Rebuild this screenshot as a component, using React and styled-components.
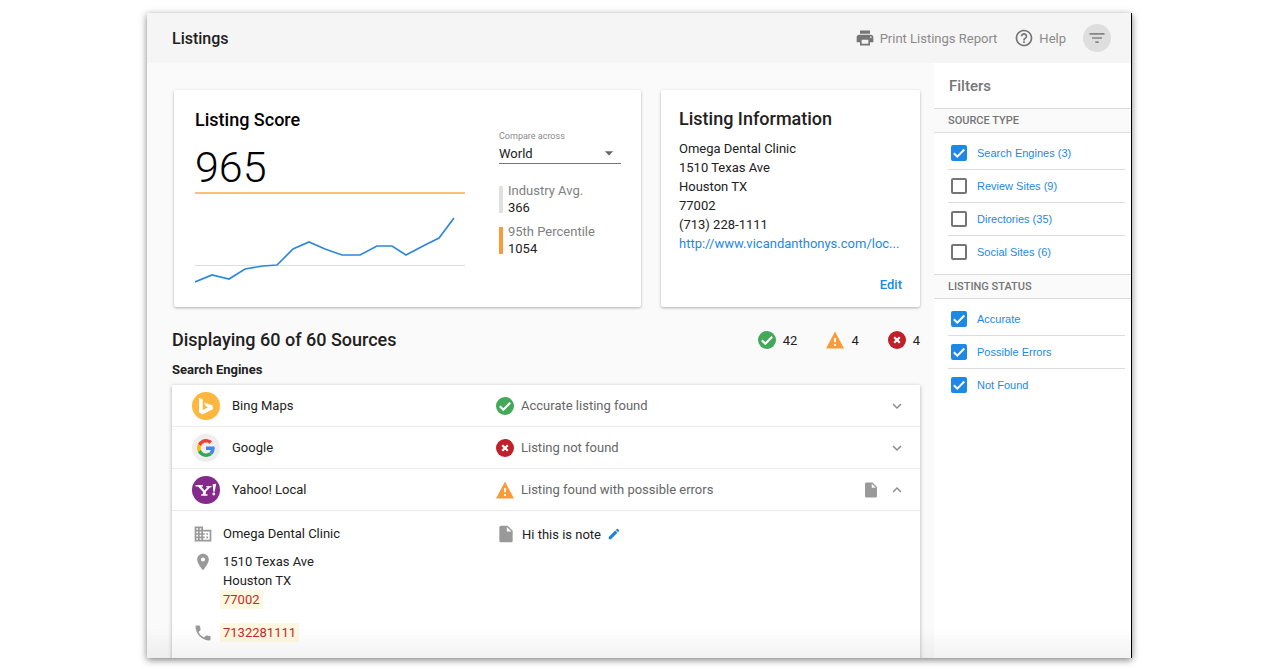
import React, { useState } from 'react';
import styled, { createGlobalStyle } from 'styled-components';
import {
    MdPrint,
    MdHelpOutline,
    MdFilterList,
    MdExpandMore,
    MdExpandLess,
    MdInsertDriveFile,
    MdEdit,
    MdBusiness,
    MdPlace,
    MdPhone,
    MdArrowDropDown
} from 'react-icons/md';

const GlobalStyle = createGlobalStyle`
    * {
        box-sizing: border-box;
    }

    body {
        margin: 0;
        background: #fff;
        color: #212121;
        font-family: Roboto, "Liberation Sans", sans-serif;
        font-size: 13px;
        line-height: 19px;
    }

    h1, h2, h3, p, ul, dl, dd {
        margin: 0;
        padding: 0;
    }

    ul {
        list-style: none;
    }

    button {
        padding: 0;
        border: 0;
        background: none;
        font: inherit;
        cursor: pointer;
    }

    a {
        color: #1e88e5;
        text-decoration: none;
    }

    svg {
        display: block;
        flex: none;
    }
`;

const Page = styled.div`
    height: 100vh;
    padding: 13px 148px 11px 147px;
`;

const Window = styled.div`
    position: relative;
    display: flex;
    flex-direction: column;
    height: 100%;
    overflow: hidden;
    background: #fafafa;
    border-right: 1px solid #000;
    box-shadow: 0 2px 7px rgba(0, 0, 0, 0.5);

    &::after {
        content: '';
        position: absolute;
        inset: auto 0 0;
        height: 30px;
        background: linear-gradient(rgba(0, 0, 0, 0), rgba(0, 0, 0, 0.05));
        pointer-events: none;
    }
`;

const Toolbar = styled.header`
    display: flex;
    flex: none;
    align-items: center;
    justify-content: space-between;
    height: 50px;
    padding: 0 20px 0 25px;
    background: #f5f5f5;

    h1 {
        font-size: 16px;
        font-weight: 500;
    }
`;

const Actions = styled.div`
    display: flex;
    align-items: center;
    gap: 17px;
`;

const ActionButton = styled.button`
    display: flex;
    align-items: center;
    gap: 5px;
    color: #8a8a8a;

    svg {
        color: #757575;
    }
`;

const RoundButton = styled.button`
    display: grid;
    place-items: center;
    width: 28px;
    height: 28px;
    border-radius: 50%;
    background: #dedede;
    color: #858585;
`;

const Body = styled.div`
    display: flex;
    flex: 1;
    min-height: 0;
`;

const Main = styled.main`
    flex: 1;
    min-width: 0;
    padding: 27px 14px 0 25px;
`;

const Cards = styled.div`
    display: grid;
    grid-template-columns: 467fr 259fr;
    gap: 20px;
    padding-left: 2px;
`;

const Card = styled.section`
    min-width: 0;
    border-radius: 2px;
    background: #fff;
    box-shadow: 0 1px 3px rgba(0, 0, 0, 0.3);
`;

const ScoreCard = styled(Card)`
    display: grid;
    grid-template-columns: 270fr 122fr;
    gap: 34px;
    padding: 18px 20px 21px 21px;
`;

const ScoreTitle = styled.h2`
    color: #000;
    font-size: 18px;
    font-weight: 500;
    line-height: 24px;
`;

const Score = styled.div`
    padding-top: 10px;
    color: #000;
    font-size: 43px;
    font-weight: 300;
    line-height: 50px;
`;

const Chart = styled.svg`
    width: 100%;
    height: auto;
`;

const Compare = styled.div`
    padding-top: 22px;

    label {
        display: block;
        color: #8a8a8a;
        font-size: 9px;
        line-height: 13px;
    }
`;

const SelectBox = styled.div`
    display: grid;
    align-items: center;
    border-bottom: 1px solid #757575;

    select, svg {
        grid-area: 1 / 1;
    }

    select {
        width: 100%;
        height: 20px;
        padding: 0;
        border: 0;
        appearance: none;
        background: none;
        color: #212121;
        font: inherit;
    }

    svg {
        justify-self: end;
        margin-right: 2px;
        color: #666;
        pointer-events: none;
    }
`;

const Stat = styled.dl`
    margin-top: ${({ $first }) => ($first ? 18 : 7)}px;
    display: flex;
    align-items: center;
    gap: 5px;

    &::before {
        content: '';
        width: 4px;
        height: 27px;
        background: ${({ $color }) => $color};
    }

    dt {
        color: #808080;
        line-height: 17px;
    }

    dd {
        line-height: 17px;
    }
`;

const InfoCard = styled(Card)`
    display: flex;
    flex-direction: column;
    padding: 16px 18px 13px 18px;

    h2 {
        margin-bottom: 8px;
        font-size: 18px;
        font-weight: 500;
        line-height: 25px;
    }

    a {
        display: block;
        overflow: hidden;
        text-overflow: ellipsis;
        white-space: nowrap;
    }

    button {
        align-self: flex-end;
        margin-top: auto;
        color: #1e88e5;
        font-weight: 500;
    }
`;

const Summary = styled.div`
    display: flex;
    align-items: center;
    justify-content: space-between;
    margin-top: 21px;

    h2 {
        font-size: 18px;
        font-weight: 500;
        line-height: 24px;
    }
`;

const Totals = styled.ul`
    display: flex;
    gap: 29px;

    li {
        display: flex;
        align-items: center;
        gap: 7px;
    }
`;

const GroupTitle = styled.h3`
    margin: 8px 0 5px;
    font-size: 13px;
    font-weight: 700;
    line-height: 20px;
`;

const Sources = styled.div`
    background: #fff;
    box-shadow: 0 1px 4px rgba(0, 0, 0, 0.3);
`;

const SourceRow = styled.div`
    display: grid;
    grid-template-columns: 324fr 424fr;
    align-items: center;
    height: 42px;
    border-bottom: 1px solid #ececec;
`;

const SourceName = styled.div`
    display: flex;
    align-items: center;
    gap: 12px;
    padding-left: 20px;
`;

const SourceStatus = styled.div`
    display: flex;
    align-items: center;
    gap: 7px;
    padding-right: 14px;
    color: #666;
`;

const RowTools = styled.div`
    display: flex;
    align-items: center;
    gap: 8px;
    margin-left: auto;
    color: #999;

    button {
        color: #8c8c8c;
    }
`;

const Details = styled.div`
    display: grid;
    grid-template-columns: 324fr 424fr;
    padding: 13px 0 40px;
`;

const Facts = styled.div`
    display: flex;
    flex-direction: column;
    gap: 8px;
    padding-left: 21px;
`;

const Fact = styled.div`
    display: grid;
    grid-template-columns: 20px 1fr;
    align-items: start;
    gap: 10px;
    margin-bottom: ${({ $spaced }) => ($spaced ? 6 : 0)}px;

    svg {
        color: #999;
    }
`;

const Wrong = styled.mark`
    padding: 2px 3px;
    margin-left: -3px;
    background: #fff8e1;
    color: #c62828;
`;

const Note = styled.div`
    display: flex;
    align-items: center;
    align-self: start;
    gap: 6px;

    svg {
        color: #999;
    }

    button svg {
        color: #1e7fdc;
    }
`;

const Sidebar = styled.aside`
    flex: none;
    width: 197px;
    background: #fff;

    h2 {
        padding: 14px 15px 12px;
        color: #757575;
        font-size: 15px;
        font-weight: 500;
        line-height: 19px;
    }
`;

const FilterGroup = styled.fieldset`
    min-width: 0;
    margin: 0;
    padding: 0;
    border: 0;
`;

const FilterTitle = styled.legend`
    width: 100%;
    padding: 0 14px;
    border: solid #dcdcdc;
    border-width: 1px 0;
    background: #fafafa;
    color: #757575;
    font-size: 11px;
    font-weight: 500;
    line-height: 23px;
`;

const FilterList = styled.ul`
    padding: 4px 6px 6px 14px;

    li + li {
        border-top: 1px solid #dcdcdc;
    }
`;

const FilterLabel = styled.label`
    display: flex;
    align-items: center;
    gap: 10px;
    height: 32px;
    padding-left: 3px;
    color: #1e88e5;
    font-family: "Liberation Sans", Arial, sans-serif;
    font-size: 11px;
`;

const Check = styled.span`
    display: grid;
    place-items: center;

    input, svg {
        grid-area: 1 / 1;
    }

    input {
        width: 16px;
        height: 16px;
        margin: 0;
        border: 2px solid #757575;
        border-radius: 2px;
        appearance: none;
        background: #fff;
    }

    input:checked {
        border-color: #1e88e5;
        background: #1e88e5;
    }

    svg {
        pointer-events: none;
    }
`;

const TickIcon = () => (
    <svg width="16" height="16" viewBox="0 0 16 16">
        <path d="M2.800 8.200l3.500 3.500 7-7.200" fill="none" stroke="#fff" strokeWidth="2"/>
    </svg>
);

const AccurateIcon = () => (
    <svg width="18" height="18" viewBox="0 0 18 18">
        <circle cx="9" cy="9" r="9" fill="#43a857"/>
        <path d="M3.800 9.200l3.500 3.500 6.900-7" fill="none" stroke="#fff" strokeWidth="2.200"/>
    </svg>
);

const MissingIcon = () => (
    <svg width="18" height="18" viewBox="0 0 18 18">
        <circle cx="9" cy="9" r="9" fill="#c1202b"/>
        <path d="M6.200 6.200l5.600 5.600M11.800 6.200l-5.600 5.600" stroke="#fff" strokeWidth="2.200"/>
    </svg>
);

const ErrorsIcon = () => (
    <svg width="18" height="18" viewBox="0 0 18 18">
        <path d="M9 .5l9 17H0z" fill="#fb9a38"/>
        <path d="M9 7v4.300M9 13v2" stroke="#fff" strokeWidth="1.800"/>
    </svg>
);

const statuses = {
    accurate: { text: 'Accurate listing found', icon: <AccurateIcon/> },
    missing: { text: 'Listing not found', icon: <MissingIcon/> },
    errors: { text: 'Listing found with possible errors', icon: <ErrorsIcon/> }
};

const sourceTypes = [
    { name: 'Search Engines (3)', checked: true },
    { name: 'Review Sites (9)', checked: false },
    { name: 'Directories (35)', checked: false },
    { name: 'Social Sites (6)', checked: false }
];

const listingStatuses = [
    { name: 'Accurate', checked: true },
    { name: 'Possible Errors', checked: true },
    { name: 'Not Found', checked: true }
];

const BingLogo = () => (
    <svg width="28" height="28" viewBox="0 0 28 28">
        <circle cx="14" cy="14" r="14" fill="#fdb73e"/>
        <path d="M7 5.800l3.700 1.500v11l5.300-3-2.400-1.200-1.500-3.700 8.700 3.200v3.600L10.500 22.500 7 20.300z" fill="#fff"/>
    </svg>
);

const GoogleLogo = () => (
    <svg width="28" height="28" viewBox="0 0 28 28">
        <circle cx="14" cy="14" r="14" fill="#eeeeee"/>
        <g transform="translate(5 5) scale(0.375)">
            <path fill="#EA4335" d="M24 9.500c3.540 0 6.710 1.220 9.210 3.600l6.850-6.850C35.900 2.380 30.470 0 24 0 14.620 0 6.510 5.380 2.560 13.220l7.980 6.190C12.430 13.720 17.740 9.500 24 9.500z"/>
            <path fill="#4285F4" d="M46.980 24.550c0-1.570-.15-3.090-.38-4.550H24v9.020h12.940c-.58 2.960-2.260 5.480-4.780 7.180l7.730 6c4.510-4.180 7.090-10.360 7.090-17.650z"/>
            <path fill="#FBBC05" d="M10.530 28.590c-.48-1.450-.76-2.990-.76-4.590s.27-3.140.76-4.590l-7.980-6.190C.92 16.460 0 20.120 0 24s.92 7.540 2.560 10.780l7.970-6.190z"/>
            <path fill="#34A853" d="M24 48c6.480 0 11.930-2.130 15.890-5.810l-7.730-6c-2.150 1.450-4.920 2.300-8.160 2.300-6.260 0-11.570-4.220-13.470-9.910l-7.980 6.190C6.510 42.620 14.620 48 24 48z"/>
        </g>
    </svg>
);

const YahooLogo = () => (
    <svg width="28" height="28" viewBox="0 0 28 28">
        <circle cx="14" cy="14" r="14" fill="#842a8b"/>
        <g fill="#fff">
            <path d="M3.500 9h7.500v1.500H9.300l3.200 4 3.100-3.200h-1.300V9.900h5.300v1.400h-1.400l-4.400 4.400v2.600h1.700v1.400H9.200v-1.400h1.700v-2.600L6 10.500H3.500z"/>
            <path d="M20.700 8.300l3.500-.5-1.500 8h-1.300z"/>
            <circle cx="21.800" cy="18" r="1.400"/>
        </g>
    </svg>
);

const ScoreChart = () => (
    <Chart viewBox="0 0 270 94" role="img" aria-label="Listing score over time">
        <path d="M0 1h270" stroke="#fdbf72" strokeWidth="2"/>
        <path d="M0 73.500h270" stroke="#dedede"/>
        <polyline
            points="0,90 17,83 34,87 50,77 68,74 82,73 98,57 114,50 130,57 147,63 165,63 182,54 197,54 211,63 228,54 244,46 259,26"
            fill="none"
            stroke="#2e87da"
            strokeWidth="1.700"
        />
    </Chart>
);

const Source = ({ name, logo, status, hasNote, open, onToggle }) => {
    const { text, icon } = statuses[status];

    return (
        <SourceRow>
            <SourceName>
                {logo}
                <span>{name}</span>
            </SourceName>
            <SourceStatus>
                {icon}
                <span>{text}</span>
                <RowTools>
                    {hasNote ? <MdInsertDriveFile size={18}/> : null}
                    <button type="button" aria-label={`Toggle ${name}`} aria-expanded={open} onClick={onToggle}>
                        {open ? <MdExpandLess size={18}/> : <MdExpandMore size={18}/>}
                    </button>
                </RowTools>
            </SourceStatus>
        </SourceRow>
    )
}

const Filter = ({ title, items }) => {
    const [checks, setChecks] = useState(items.map((item) => item.checked));

    const toggle = (index) => {
        setChecks(checks.map((value, i) => (i === index ? !value : value)));
    }

    return (
        <FilterGroup>
            <FilterTitle>{title}</FilterTitle>
            <FilterList>
                {items.map(({ name }, i) => (
                    <li key={name}>
                        <FilterLabel>
                            <Check>
                                <input type="checkbox" checked={checks[i]} onChange={() => toggle(i)}/>
                                {checks[i] ? <TickIcon/> : null}
                            </Check>
                            {name}
                        </FilterLabel>
                    </li>
                ))}
            </FilterList>
        </FilterGroup>
    )
}

export default function App() {
    const [opened, setOpened] = useState({ yahoo: true });

    const toggle = (id) => setOpened({ ...opened, [id]: !opened[id] });

    return (
        <Page>
            <GlobalStyle/>
            <Window>
                <Toolbar>
                    <h1>Listings</h1>
                    <Actions>
                        <ActionButton type="button">
                            <MdPrint size={20}/>
                            Print Listings Report
                        </ActionButton>
                        <ActionButton type="button">
                            <MdHelpOutline size={20}/>
                            Help
                        </ActionButton>
                        <RoundButton type="button" aria-label="Filters">
                            <MdFilterList size={20}/>
                        </RoundButton>
                    </Actions>
                </Toolbar>
                <Body>
                    <Main>
                        <Cards>
                            <ScoreCard>
                                <div>
                                    <ScoreTitle>Listing Score</ScoreTitle>
                                    <Score>965</Score>
                                    <ScoreChart/>
                                </div>
                                <Compare>
                                    <label htmlFor="compare">Compare across</label>
                                    <SelectBox>
                                        <select id="compare" defaultValue="World">
                                            <option>World</option>
                                        </select>
                                        <MdArrowDropDown size={20}/>
                                    </SelectBox>
                                    <Stat $first $color="#e0e0e0">
                                        <div>
                                            <dt>Industry Avg.</dt>
                                            <dd>366</dd>
                                        </div>
                                    </Stat>
                                    <Stat $color="#fb9a38">
                                        <div>
                                            <dt>95th Percentile</dt>
                                            <dd>1054</dd>
                                        </div>
                                    </Stat>
                                </Compare>
                            </ScoreCard>
                            <InfoCard>
                                <h2>Listing Information</h2>
                                <p>Omega Dental Clinic</p>
                                <p>1510 Texas Ave</p>
                                <p>Houston TX</p>
                                <p>77002</p>
                                <p>(713) 228-1111</p>
                                <a href="#website">http://www.vicandanthonys.com/loc...</a>
                                <button type="button">Edit</button>
                            </InfoCard>
                        </Cards>
                        <Summary>
                            <h2>Displaying 60 of 60 Sources</h2>
                            <Totals>
                                <li>{statuses.accurate.icon}42</li>
                                <li>{statuses.errors.icon}4</li>
                                <li>{statuses.missing.icon}4</li>
                            </Totals>
                        </Summary>
                        <GroupTitle>Search Engines</GroupTitle>
                        <Sources>
                            <Source
                                name="Bing Maps"
                                logo={<BingLogo/>}
                                status="accurate"
                                open={!!opened.bing}
                                onToggle={() => toggle('bing')}
                            />
                            <Source
                                name="Google"
                                logo={<GoogleLogo/>}
                                status="missing"
                                open={!!opened.google}
                                onToggle={() => toggle('google')}
                            />
                            <Source
                                name="Yahoo! Local"
                                logo={<YahooLogo/>}
                                status="errors"
                                hasNote
                                open={opened.yahoo}
                                onToggle={() => toggle('yahoo')}
                            />
                            {opened.yahoo ? (
                                <Details>
                                    <Facts>
                                        <Fact>
                                            <MdBusiness size={20}/>
                                            <p>Omega Dental Clinic</p>
                                        </Fact>
                                        <Fact $spaced>
                                            <MdPlace size={20}/>
                                            <div>
                                                <p>1510 Texas Ave</p>
                                                <p>Houston TX</p>
                                                <p><Wrong>77002</Wrong></p>
                                            </div>
                                        </Fact>
                                        <Fact>
                                            <MdPhone size={20}/>
                                            <p><Wrong>7132281111</Wrong></p>
                                        </Fact>
                                    </Facts>
                                    <Note>
                                        <MdInsertDriveFile size={20}/>
                                        Hi this is note
                                        <button type="button" aria-label="Edit note"><MdEdit size={14}/></button>
                                    </Note>
                                </Details>
                            ) : null}
                        </Sources>
                    </Main>
                    <Sidebar>
                        <h2>Filters</h2>
                        <Filter title="SOURCE TYPE" items={sourceTypes}/>
                        <Filter title="LISTING STATUS" items={listingStatuses}/>
                    </Sidebar>
                </Body>
            </Window>
        </Page>
    )
}
